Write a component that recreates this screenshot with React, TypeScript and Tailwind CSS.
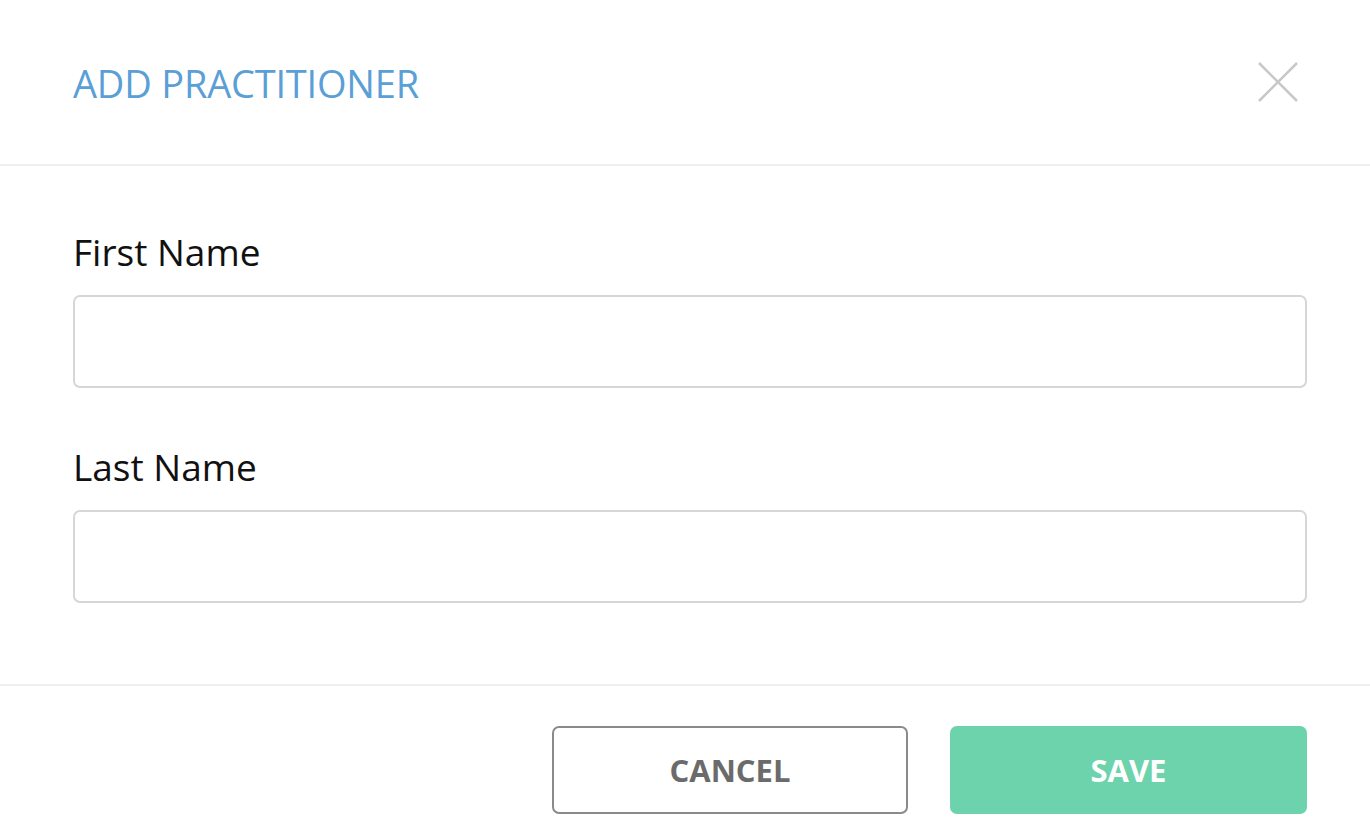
import React, { useState } from 'react';

// Поле формы с подписью
function Field({ label, value, onChange }: { label: string; value: string; onChange: (v: string) => void }) {
  return (
    <div className="flex flex-col">
      <label className="text-[37px] leading-[44px] text-[#111] mb-[21px]">{label}</label>
      <input
        type="text"
        value={value}
        onChange={(e) => onChange(e.target.value)}
        className="h-[93px] w-full rounded-[7px] border-2 border-[#d6d6d6] px-5 text-[30px] outline-none focus:border-[#5a9fd6]"
      />
    </div>
  );
}

export default function App() {
  const [firstName, setFirstName] = useState('');
  const [lastName, setLastName] = useState('');

  return (
    <div className="w-[1370px] h-[836px] bg-white flex flex-col overflow-hidden" style={{ fontFamily: '"Open Sans", "Noto Sans", sans-serif' }}>
      <div className="h-[166px] shrink-0 flex items-center justify-between pl-[73px] pr-[72px] border-b-2 border-[#efefef]">
        <h1 className="text-[38px] font-normal tracking-[-0.2px] text-[#5a9fd6] pt-[2px]">ADD PRACTITIONER</h1>
        <button className="w-[40px] h-[40px] flex items-center justify-center" aria-label="Close">
          <svg width="40" height="40" viewBox="0 0 40 40" fill="none">
            <path d="M1 1 L39 39 M39 1 L1 39" stroke="#c8c8c8" strokeWidth="2.5" />
          </svg>
        </button>
      </div>

      <div className="h-[520px] shrink-0 flex flex-col gap-[57px] pt-[64px] pl-[73px] pr-[63px] border-b-2 border-[#efefef]">
        <Field label="First Name" value={firstName} onChange={setFirstName} />
        <Field label="Last Name" value={lastName} onChange={setLastName} />
      </div>

      <div className="flex justify-end gap-[42px] pt-[40px] pr-[63px]">
        <button className="w-[356px] h-[88px] rounded-[7px] border-2 border-[#8a8a8a] bg-white text-[31px] font-bold text-[#6b6b6b]">
          CANCEL
        </button>
        <button className="w-[357px] h-[88px] rounded-[7px] bg-[#6cd3ad] text-[31px] font-bold text-white">
          SAVE
        </button>
      </div>
    </div>
  );
}
